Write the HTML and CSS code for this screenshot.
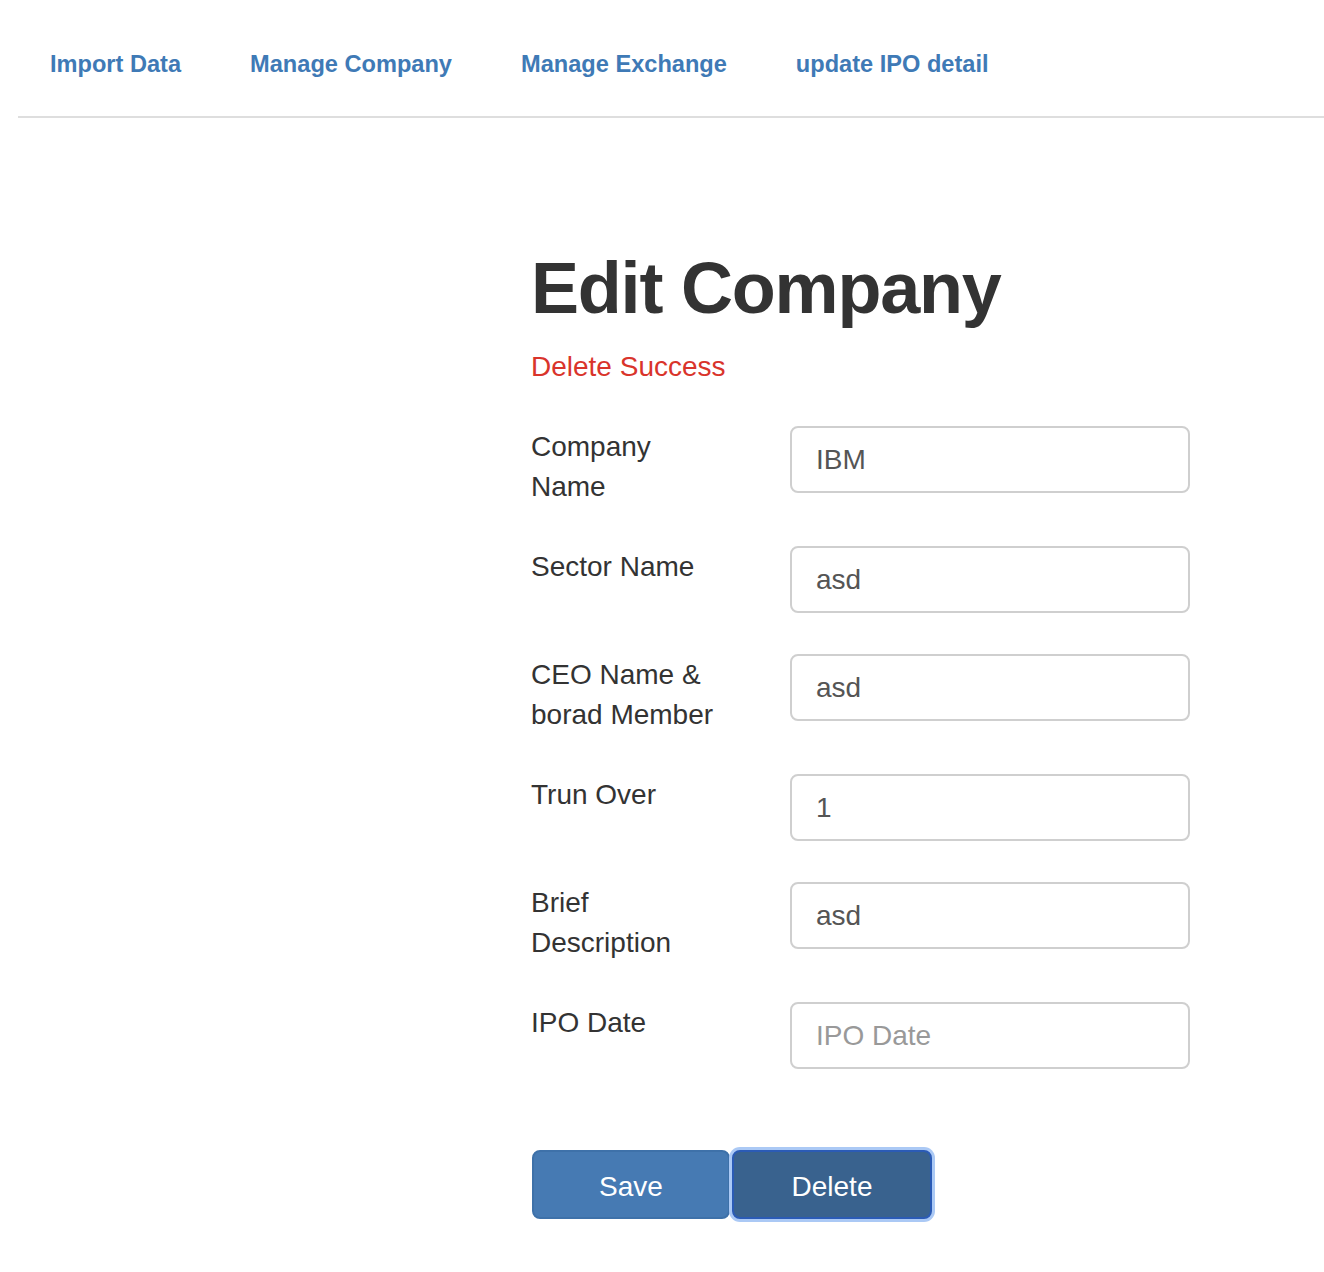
FILE: index.html
```html
<!DOCTYPE html>
<html lang="en">
<head>
<meta charset="utf-8">
<title>Edit Company</title>
<link rel="stylesheet" href="styles.css">
</head>
<body>
<nav class="topnav">
  <a class="nav-link" href="#">Import Data</a>
  <a class="nav-link" href="#">Manage Company</a>
  <a class="nav-link" href="#">Manage Exchange</a>
  <a class="nav-link" href="#">update IPO detail</a>
</nav>
<main class="page">
  <h1 class="title">Edit Company</h1>
  <p class="alert">Delete Success</p>
  <form class="edit-form">
    <div class="fields">
      <label class="field-label" for="cname">Company<br>Name</label>
      <input class="field-input" id="cname" type="text" value="IBM">
      <label class="field-label" for="sname">Sector Name</label>
      <input class="field-input" id="sname" type="text" value="asd">
      <label class="field-label" for="ceo">CEO Name &amp;<br>borad Member</label>
      <input class="field-input" id="ceo" type="text" value="asd">
      <label class="field-label" for="turn">Trun Over</label>
      <input class="field-input" id="turn" type="text" value="1">
      <label class="field-label" for="brief">Brief<br>Description</label>
      <input class="field-input" id="brief" type="text" value="asd">
      <label class="field-label" for="ipo">IPO Date</label>
      <input class="field-input" id="ipo" type="text" placeholder="IPO Date">
    </div>
    <div class="actions">
      <button class="btn btn-save" type="button">Save</button>
      <button class="btn btn-delete" type="button">Delete</button>
    </div>
  </form>
</main>
</body>
</html>
```
FILE: styles.css
```css
html, body {
  margin: 0;
  padding: 0;
  background: #fff;
}
body {
  font-family: "Liberation Sans", Arial, Helvetica, sans-serif;
  color: #333;
}
.topnav {
  display: flex;
  gap: 69px;
  margin-left: 18px;
  padding: 47px 0 35px 32px;
  border-bottom: 2px solid #dedede;
}
.nav-link {
  font-size: 23.6px;
  font-weight: 700;
  line-height: 34px;
  color: #3f7ab6;
  text-decoration: none;
}
.page {
  margin-left: 531px;
  width: 660px;
  padding-bottom: 40px;
}
.title {
  margin: 131px 0 0;
  font-size: 72px;
  font-weight: 700;
  letter-spacing: -1.2px;
  line-height: 79px;
  color: #333;
}
.alert {
  margin: 19px 0 0;
  font-size: 28px;
  line-height: 40px;
  color: #d9342b;
}
.edit-form {
  margin-top: 38px;
}
.fields {
  display: grid;
  grid-template-columns: 259px 400px;
  row-gap: 40px;
  align-items: start;
}
.field-label {
  margin: 2px 0 -2px;
  font-size: 28px;
  line-height: 40px;
  color: #333;
}
.field-input {
  box-sizing: border-box;
  width: 400px;
  height: 67px;
  margin: 1px 0 0;
  padding: 1px 24px 0;
  border: 2px solid #cfcfcf;
  border-radius: 8px;
  font-family: inherit;
  font-size: 28px;
  color: #555;
  background: #fff;
  outline: none;
}
.field-input::placeholder {
  color: #999;
}
.actions {
  display: flex;
  gap: 2px;
  margin-top: 81px;
  padding-left: 1px;
}
.btn {
  box-sizing: border-box;
  height: 69px;
  padding: 4px 0 0;
  border-radius: 8px;
  font-family: inherit;
  font-size: 28px;
  color: #fff;
  cursor: pointer;
}
.btn-save {
  width: 198px;
  background: #467ab3;
  border: 2px solid #3e71a9;
}
.btn-delete {
  width: 200px;
  background: #39628e;
  border: 2px solid #2b5bb5;
  box-shadow: 0 0 0 3px #abc9f5;
}
```
